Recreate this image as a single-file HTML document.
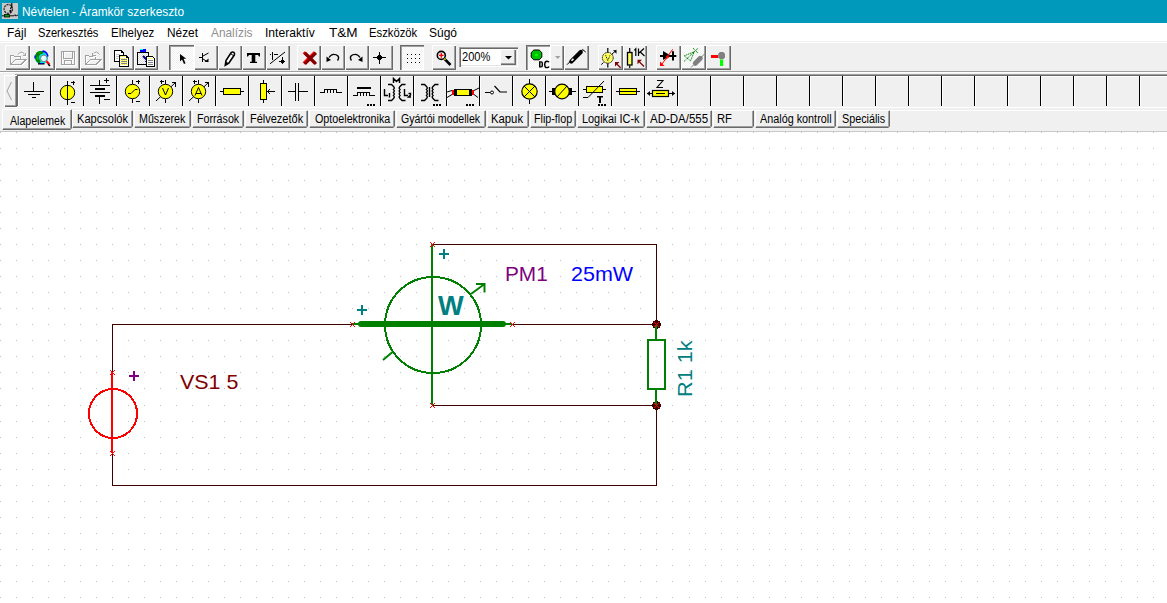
<!DOCTYPE html><html><head><meta charset='utf-8'><style>
*{margin:0;padding:0;box-sizing:border-box}
html,body{width:1167px;height:603px;overflow:hidden;background:#fff;font-family:"Liberation Sans", sans-serif;}
.a{position:absolute}
.t{position:absolute;white-space:pre;line-height:1;font-family:"Liberation Sans", sans-serif}
.btn{position:absolute;top:45px;height:25px;background:#F0F0F0;
  box-shadow: inset 1px 1px #FFFFFF, inset -1px -1px #696969, inset -2px -2px #A0A0A0;}
.dith{background-color:#F0F0F0;background-image:conic-gradient(#fff 25%, transparent 0 50%, #fff 0 75%, transparent 0);background-size:2px 2px;}
.prs{position:absolute;top:45px;height:25px;
  box-shadow: inset 1px 1px #696969, inset 2px 2px #A0A0A0, inset -1px -1px #FFFFFF;}
.tab{position:absolute;top:110px;height:18px;background:#F0F0F0;
  box-shadow: inset 1px 1px #FFFFFF, inset -1px -1px #696969, inset -2px -2px #A0A0A0;
  clip-path: polygon(0 0, calc(100% - 1px) 0, 100% 1px, 100% calc(100% - 2px), calc(100% - 2px) 100%, 1px 100%, 0 calc(100% - 1px));}
</style></head><body>
<div class='a' style='left:0;top:0;width:1167px;height:23px;background:#0099BC'></div>
<svg class='a' style='left:2px;top:3px' width='16' height='16' viewBox='0 0 16 16'>
<rect x='0' y='0' width='16' height='16' fill='#C8C8C8'/>
<ellipse cx='6.3' cy='6' rx='4.2' ry='4.5' fill='none' stroke='#303030' stroke-width='1.3' stroke-dasharray='2.2 0.8'/>
<path d='M9.8 0 V3 L8.5 6' fill='none' stroke='#000' stroke-width='1.1'/>
<path d='M7.2 7.5 L9.2 6.8 L9.6 9.2 L8 9.8 Z' fill='#000'/>
<rect x='2.5' y='11.6' width='5' height='2.4' fill='#00A000' stroke='#000' stroke-width='0.8'/>
<path d='M0 12.8 H2.5 M7.5 12.8 H12 L13 11.6 L14 13.2 L15 12.2 H16' fill='none' stroke='#111' stroke-width='1'/>
</svg>
<div class='a' style='left:0;top:23px;width:1167px;height:18px;background:#fff'></div>
<div class='a' style='left:0;top:41px;width:1167px;height:91px;background:#F0F0F0'></div>
<div class='a' style='left:0;top:42px;width:1167px;height:1px;background:#FFFFFF'></div>
<div class='a' style='left:0;top:71px;width:1167px;height:1px;background:#A0A0A0'></div>
<div class='a' style='left:0;top:72px;width:1167px;height:1px;background:#FFFFFF'></div>
<div class='btn' style='left:5px;width:25px'></div>
<div class='btn' style='left:30px;width:25px'></div>
<div class='btn' style='left:55px;width:25px'></div>
<div class='btn' style='left:80px;width:25px'></div>
<div class='btn' style='left:109px;width:25px'></div>
<div class='btn' style='left:134px;width:24px'></div>
<div class='prs dith' style='left:169px;width:25px'></div>
<div class='btn' style='left:194px;width:24px'></div>
<div class='btn' style='left:218px;width:24px'></div>
<div class='btn' style='left:242px;width:24px'></div>
<div class='btn' style='left:266px;width:24px'></div>
<div class='btn' style='left:297px;width:24px'></div>
<div class='btn' style='left:321px;width:24px'></div>
<div class='btn' style='left:345px;width:24px'></div>
<div class='btn' style='left:369px;width:24px'></div>
<div class='prs dith' style='left:400px;width:24px'></div>
<div class='btn' style='left:432px;width:24px'></div>
<div class='prs dith' style='left:526px;width:24px'></div>
<div class='btn' style='left:550px;width:14px'></div>
<div class='btn' style='left:564px;width:25px'></div>
<div class='btn' style='left:598px;width:25px'></div>
<div class='btn' style='left:623px;width:24px'></div>
<div class='btn' style='left:656px;width:25px'></div>
<div class='btn dith' style='left:681px;width:25px'></div>
<div class='btn' style='left:706px;width:25px'></div>
<div class='a' style='left:459px;top:47px;width:59px;height:20px;background:#fff;box-shadow: inset 1px 1px #A0A0A0, inset 2px 2px #696969, inset -1px -1px #fff, inset -2px -2px #E3E3E3'></div>
<div class='a' style='left:500px;top:49px;width:16px;height:16px;background:#F0F0F0;box-shadow: inset 1px 1px #fff, inset -1px -1px #696969, inset -2px -2px #A0A0A0'></div>
<div class='a' style='left:15px;top:74px;width:1152px;height:33px;background:#F0F0F0;box-shadow: inset 1px 1px #A0A0A0, inset 2px 2px #696969'></div>
<div class='a' style='left:18px;top:76px;width:1149px;height:1px;background:#FFFFFF'></div>
<div class='a' style='left:4px;top:107px;width:1163px;height:1px;background:#FFFFFF'></div>
<div class='a' style='left:17px;top:76px;width:1px;height:30px;background:#696969'></div>
<div class='a' style='left:18px;top:76px;width:1px;height:30px;background:#FFFFFF'></div>
<div class='a' style='left:50px;top:76px;width:1px;height:30px;background:#000'></div>
<div class='a' style='left:51px;top:76px;width:1px;height:30px;background:#FFFFFF'></div>
<div class='a' style='left:83px;top:76px;width:1px;height:30px;background:#000'></div>
<div class='a' style='left:84px;top:76px;width:1px;height:30px;background:#FFFFFF'></div>
<div class='a' style='left:116px;top:76px;width:1px;height:30px;background:#000'></div>
<div class='a' style='left:117px;top:76px;width:1px;height:30px;background:#FFFFFF'></div>
<div class='a' style='left:149px;top:76px;width:1px;height:30px;background:#000'></div>
<div class='a' style='left:150px;top:76px;width:1px;height:30px;background:#FFFFFF'></div>
<div class='a' style='left:182px;top:76px;width:1px;height:30px;background:#000'></div>
<div class='a' style='left:183px;top:76px;width:1px;height:30px;background:#FFFFFF'></div>
<div class='a' style='left:215px;top:76px;width:1px;height:30px;background:#000'></div>
<div class='a' style='left:216px;top:76px;width:1px;height:30px;background:#FFFFFF'></div>
<div class='a' style='left:248px;top:76px;width:1px;height:30px;background:#000'></div>
<div class='a' style='left:249px;top:76px;width:1px;height:30px;background:#FFFFFF'></div>
<div class='a' style='left:281px;top:76px;width:1px;height:30px;background:#000'></div>
<div class='a' style='left:282px;top:76px;width:1px;height:30px;background:#FFFFFF'></div>
<div class='a' style='left:314px;top:76px;width:1px;height:30px;background:#000'></div>
<div class='a' style='left:315px;top:76px;width:1px;height:30px;background:#FFFFFF'></div>
<div class='a' style='left:347px;top:76px;width:1px;height:30px;background:#000'></div>
<div class='a' style='left:348px;top:76px;width:1px;height:30px;background:#FFFFFF'></div>
<div class='a' style='left:380px;top:76px;width:1px;height:30px;background:#000'></div>
<div class='a' style='left:381px;top:76px;width:1px;height:30px;background:#FFFFFF'></div>
<div class='a' style='left:413px;top:76px;width:1px;height:30px;background:#000'></div>
<div class='a' style='left:414px;top:76px;width:1px;height:30px;background:#FFFFFF'></div>
<div class='a' style='left:446px;top:76px;width:1px;height:30px;background:#000'></div>
<div class='a' style='left:447px;top:76px;width:1px;height:30px;background:#FFFFFF'></div>
<div class='a' style='left:479px;top:76px;width:1px;height:30px;background:#000'></div>
<div class='a' style='left:480px;top:76px;width:1px;height:30px;background:#FFFFFF'></div>
<div class='a' style='left:512px;top:76px;width:1px;height:30px;background:#000'></div>
<div class='a' style='left:513px;top:76px;width:1px;height:30px;background:#FFFFFF'></div>
<div class='a' style='left:545px;top:76px;width:1px;height:30px;background:#000'></div>
<div class='a' style='left:546px;top:76px;width:1px;height:30px;background:#FFFFFF'></div>
<div class='a' style='left:578px;top:76px;width:1px;height:30px;background:#000'></div>
<div class='a' style='left:579px;top:76px;width:1px;height:30px;background:#FFFFFF'></div>
<div class='a' style='left:611px;top:76px;width:1px;height:30px;background:#000'></div>
<div class='a' style='left:612px;top:76px;width:1px;height:30px;background:#FFFFFF'></div>
<div class='a' style='left:644px;top:76px;width:1px;height:30px;background:#000'></div>
<div class='a' style='left:645px;top:76px;width:1px;height:30px;background:#FFFFFF'></div>
<div class='a' style='left:677px;top:76px;width:1px;height:30px;background:#000'></div>
<div class='a' style='left:678px;top:76px;width:1px;height:30px;background:#FFFFFF'></div>
<div class='a' style='left:710px;top:76px;width:1px;height:30px;background:#000'></div>
<div class='a' style='left:711px;top:76px;width:1px;height:30px;background:#FFFFFF'></div>
<div class='a' style='left:743px;top:76px;width:1px;height:30px;background:#000'></div>
<div class='a' style='left:744px;top:76px;width:1px;height:30px;background:#FFFFFF'></div>
<div class='a' style='left:776px;top:76px;width:1px;height:30px;background:#000'></div>
<div class='a' style='left:777px;top:76px;width:1px;height:30px;background:#FFFFFF'></div>
<div class='a' style='left:809px;top:76px;width:1px;height:30px;background:#000'></div>
<div class='a' style='left:810px;top:76px;width:1px;height:30px;background:#FFFFFF'></div>
<div class='a' style='left:842px;top:76px;width:1px;height:30px;background:#000'></div>
<div class='a' style='left:843px;top:76px;width:1px;height:30px;background:#FFFFFF'></div>
<div class='a' style='left:875px;top:76px;width:1px;height:30px;background:#000'></div>
<div class='a' style='left:876px;top:76px;width:1px;height:30px;background:#FFFFFF'></div>
<div class='a' style='left:908px;top:76px;width:1px;height:30px;background:#000'></div>
<div class='a' style='left:909px;top:76px;width:1px;height:30px;background:#FFFFFF'></div>
<div class='a' style='left:941px;top:76px;width:1px;height:30px;background:#000'></div>
<div class='a' style='left:942px;top:76px;width:1px;height:30px;background:#FFFFFF'></div>
<div class='a' style='left:974px;top:76px;width:1px;height:30px;background:#000'></div>
<div class='a' style='left:975px;top:76px;width:1px;height:30px;background:#FFFFFF'></div>
<div class='a' style='left:1007px;top:76px;width:1px;height:30px;background:#000'></div>
<div class='a' style='left:1008px;top:76px;width:1px;height:30px;background:#FFFFFF'></div>
<div class='a' style='left:1040px;top:76px;width:1px;height:30px;background:#000'></div>
<div class='a' style='left:1041px;top:76px;width:1px;height:30px;background:#FFFFFF'></div>
<div class='a' style='left:1073px;top:76px;width:1px;height:30px;background:#000'></div>
<div class='a' style='left:1074px;top:76px;width:1px;height:30px;background:#FFFFFF'></div>
<div class='a' style='left:1106px;top:76px;width:1px;height:30px;background:#000'></div>
<div class='a' style='left:1107px;top:76px;width:1px;height:30px;background:#FFFFFF'></div>
<div class='a' style='left:1139px;top:76px;width:1px;height:30px;background:#000'></div>
<div class='a' style='left:1140px;top:76px;width:1px;height:30px;background:#FFFFFF'></div>
<div class='a' style='left:4px;top:75px;width:13px;height:32px;background:#F0F0F0;box-shadow: inset 1px 1px #fff, inset -1px -1px #696969, inset -2px -2px #A0A0A0'></div>
<div class='a' style='left:72px;top:110px;width:1095px;height:1px;background:#FFFFFF'></div>
<div class='tab' style='left:2px;top:109px;width:70px;height:21px'></div>
<div class='tab' style='left:72px;width:61px'></div>
<div class='tab' style='left:134px;width:57px'></div>
<div class='tab' style='left:192px;width:52px'></div>
<div class='tab' style='left:245px;width:63px'></div>
<div class='tab' style='left:309px;width:86px'></div>
<div class='tab' style='left:396px;width:90px'></div>
<div class='tab' style='left:487px;width:42px'></div>
<div class='tab' style='left:530px;width:46px'></div>
<div class='tab' style='left:577px;width:68px'></div>
<div class='tab' style='left:646px;width:66px'></div>
<div class='tab' style='left:713px;width:41px'></div>
<div class='tab' style='left:755px;width:81px'></div>
<div class='tab' style='left:837px;width:53px'></div>
<div class='a' style='left:0;top:131px;width:1167px;height:1px;background:#C8C8C8'></div>
<svg class='a' style='left:0;top:0' width='1167' height='132' viewBox='0 0 1167 132'>
<defs>
<pattern id='dy' x='0' y='0' width='2' height='2' patternUnits='userSpaceOnUse'><rect width='2' height='2' fill='#FFFF00'/><rect width='1' height='1' fill='#FFFFC0'/><rect x='1' y='1' width='1' height='1' fill='#FFFFC0'/></pattern>
<pattern id='dyw' x='0' y='0' width='2' height='2' patternUnits='userSpaceOnUse'><rect width='2' height='2' fill='#FFFFFF'/><rect width='1' height='1' fill='#FFFF00'/></pattern>
<pattern id='dw' x='0' y='0' width='2' height='2' patternUnits='userSpaceOnUse'><rect width='2' height='2' fill='#FFFFFF'/><rect width='1' height='1' fill='#D8D8D8'/><rect x='1' y='1' width='1' height='1' fill='#D8D8D8'/></pattern>
</defs>
<!-- ===== toolbar 1 ===== -->
<g fill='none' stroke-width='1' shape-rendering='crispEdges'>
 <!-- B1 folder disabled -->
 <g stroke='#FFFFFF' transform='translate(1,1)'>
  <path d='M10.5 64.5 V55.5 H13.5 L14.5 56.5 H20.5 V59.5 M10.5 64.5 H21 L26 59.5 H15.5 L10.5 64.5'/>
 </g>
 <g stroke='#A0A0A0'>
  <path d='M10.5 64.5 V55.5 H13.5 L14.5 56.5 H20.5 V59.5 M10.5 64.5 H21 L26 59.5 H15.5 L10.5 64.5'/>
 </g>
 <!-- B3 floppy disabled -->
 <g stroke='#FFFFFF' transform='translate(1,1)'>
  <path d='M61.5 52.5 Q61.5 51.5 62.5 51.5 H73.5 Q74.5 51.5 74.5 52.5 V63.5 Q74.5 64.5 73.5 64.5 H62.5 Q61.5 64.5 61.5 63.5 Z M63.5 51.5 V58.5 H72.5 V51.5 M64.5 64.5 V60.5 H71.5 V64.5'/>
 </g>
 <g stroke='#A0A0A0'>
  <path d='M61.5 52.5 Q61.5 51.5 62.5 51.5 H73.5 Q74.5 51.5 74.5 52.5 V63.5 Q74.5 64.5 73.5 64.5 H62.5 Q61.5 64.5 61.5 63.5 Z M63.5 51.5 V58.5 H72.5 V51.5 M64.5 64.5 V60.5 H71.5 V64.5'/>
 </g>
 <!-- B4 folder w/ back arrow -->
 <g stroke='#FFFFFF' transform='translate(76,1)'>
  <path d='M10.5 64.5 V55.5 H13.5 L14.5 56.5 H20.5 V59.5 M10.5 64.5 H21 L26 59.5 H15.5 L10.5 64.5'/>
 </g>
 <g stroke='#A0A0A0' transform='translate(75,0)'>
  <path d='M10.5 64.5 V55.5 H13.5 L14.5 56.5 H20.5 V59.5 M10.5 64.5 H21 L26 59.5 H15.5 L10.5 64.5'/>
 </g>
</g>
<g fill='none' stroke-width='1'>
 <path d='M18 54.5 Q21 50 24.5 54' stroke='#FFFFFF' transform='translate(1,1)'/>
 <path d='M18 54.5 Q21 50 24.5 54' stroke='#A0A0A0'/>
 <path d='M22.5 55.5 H25.5 V52.5' stroke='#FFFFFF' transform='translate(1,1)'/>
 <path d='M22.5 55.5 H25.5 V52.5' stroke='#A0A0A0' shape-rendering='crispEdges'/>
 <path d='M99.5 54.5 Q96.5 50 93 54' stroke='#FFFFFF' transform='translate(1,1)'/>
 <path d='M99.5 54.5 Q96.5 50 93 54' stroke='#A0A0A0'/>
 <path d='M92.5 52.5 V55.5 H95.5' stroke='#FFFFFF' transform='translate(1,1)'/>
 <path d='M92.5 52.5 V55.5 H95.5' stroke='#A0A0A0' shape-rendering='crispEdges'/>
</g>
<!-- B2 globe -->
<g>
 <circle cx='41.5' cy='57.5' r='6.6' fill='#00E0E0'/>
 <path d='M35.2 56 Q35.5 52 39.5 51 Q42 50.8 44 51.5 L43 53.5 Q40 53.5 39 56 Q38.5 59 40.5 61.5 L39.5 63.5 Q35.5 62 35.2 58 Z' fill='#008000'/>
 <path d='M38.5 52.5 L41 52 L40 54 Z M36.5 57 L38 56 L38.5 59.5 L37 60 Z' fill='#00C000'/>
 <path d='M42.5 51 Q47 51.5 48 56.5 M35 55.5 V58.5' fill='none' stroke='#0000FF' stroke-width='1.3'/>
 <path d='M38 63.8 H44.5' stroke='#000' stroke-width='1.4'/>
 <path d='M40 63.5 H43' stroke='#0000C0' stroke-width='1'/>
 <circle cx='43.8' cy='58.4' r='3.3' fill='#D0FFFF' stroke='#707070' stroke-width='0.9'/>
 <circle cx='43.3' cy='57.8' r='1.3' fill='#FFFFFF'/>
 <path d='M46.5 61.2 L49.3 64.5' stroke='#FF0000' stroke-width='2.2'/>
 <path d='M48.3 64.2 L50 66' stroke='#000' stroke-width='1.6'/>
</g>
<!-- B5 copy -->
<g shape-rendering='crispEdges'>
 <path d='M114.5 50.5 H121.5 L123.5 52.5 V61.5 H114.5 Z' fill='#FFFFFF' stroke='#000'/>
 <path d='M121.5 50.5 V52.5 H123.5' fill='none' stroke='#000'/>
 <path d='M116 54.5 H120 M116 56.5 H120 M116 58.5 H118' stroke='#C0C0C0'/>
 <path d='M119.5 55.5 H126.5 L128.5 57.5 V66.5 H119.5 Z' fill='url(#dyw)' stroke='#000'/>
 <path d='M126.5 55.5 V57.5 H128.5' fill='none' stroke='#000'/>
 <path d='M121 59.5 H127 M121 61.5 H127 M121 63.5 H127' stroke='#808080'/>
</g>
<!-- B6 paste -->
<g shape-rendering='crispEdges'>
 <path d='M137.5 52.5 H148.5 V64.5 H137.5 Z' fill='url(#dw)' stroke='#000'/>
 <rect x='140' y='49' width='6' height='3' fill='#0000FF'/>
 <rect x='140' y='49' width='3' height='1' fill='#00FFFF'/>
 <path d='M143 56 L147 60' stroke='#000080' stroke-width='2' shape-rendering='auto'/>
 <path d='M145 61.5 L148.5 61.5 L148.5 58 Z' fill='#0000A0'/>
 <path d='M146.5 56.5 H152.5 L154.5 58.5 V66.5 H146.5 Z' fill='url(#dyw)' stroke='#000'/>
 <path d='M148 60.5 H153 M148 62.5 H153 M148 64.5 H153' stroke='#808080'/>
</g>
<!-- B7 arrow -->
<path d='M180 54 L180 61.5 L182 59.5 L184 64 L185.5 63.3 L183.6 58.8 L186.3 58.8 Z' fill='#000'/>
<!-- B8 transistor -->
<g fill='none' stroke='#000' shape-rendering='crispEdges'>
 <path d='M199 57.5 H202 M202.5 53 V62'/>
</g>
<g fill='none' stroke='#000'>
 <path d='M203 56 L208.5 53 M203 59 L207 61.5'/>
</g>
<path d='M204.5 62 H208.5 V58.5 Z' fill='#000'/>
<!-- B9 pencil -->
<path d='M225.3 65.2 L226 60.5 L231.2 52.6 Q232.5 51.5 234 52.5 Q235 53.5 234.3 55 L228.8 63.2 Z' fill='#FFFFFF' stroke='#000' stroke-width='1.6'/>
<path d='M225.3 65.2 L225.8 61.3 L228.5 63.3 Z' fill='#000'/>
<path d='M230.6 53.6 L234 56' stroke='#000' stroke-width='1'/>
<!-- B10 T -->
<path d='M247 53 H260 V56.5 H259 L258 55 H255.3 V61.8 H257 V63 H250 V61.8 H251.7 V55 H249 L248 56.5 H247 Z' fill='#000'/>
<!-- B11 wire tool -->
<g fill='none' stroke='#000' shape-rendering='crispEdges'>
 <path d='M272.5 52 V60 M274 54.5 H278 M282.5 57 V64 M278.5 61.5 H285'/>
 <rect x='270' y='54' width='1' height='1' fill='#000' stroke='none'/>
</g>
<path d='M270 63.8 L285 52' stroke='#000' stroke-width='1' fill='none'/>
<rect x='281' y='60' width='3' height='3' fill='#000'/>
<!-- B12 X -->
<path d='M305.5 53.5 L314.5 62.5 M314.5 53.5 L305.5 62.5' stroke='#FF0000' stroke-width='3' stroke-linecap='square' transform='translate(-0.7,-0.2)'/>
<path d='M305.5 53.5 L314.5 62.5 M314.5 53.5 L305.5 62.5' stroke='#800000' stroke-width='3' stroke-linecap='square' transform='translate(0.4,0.4)'/>
<!-- B13 undo -->
<path d='M337.5 60.5 Q339.5 58 338 56 Q336.5 54.3 333.5 54.3 Q331 54.3 329 57.5' fill='none' stroke='#000' stroke-width='1.3'/>
<path d='M326.5 56.5 L326.5 62 L331 60 Z' fill='#000'/>
<!-- B14 redo -->
<path d='M351.5 60.5 Q349.5 58 351 56 Q352.5 54.3 355.5 54.3 Q358 54.3 360 57.5' fill='none' stroke='#000' stroke-width='1.3'/>
<path d='M362.5 56.5 L362.5 62 L358 60 Z' fill='#000'/>
<!-- B15 junction -->
<g fill='none' stroke='#000' shape-rendering='crispEdges'>
 <path d='M373 57.5 H386 M379.5 52 V64'/>
</g>
<rect x='377' y='56' width='5' height='3' fill='#000'/>
<rect x='378' y='55' width='3' height='5' fill='#000'/>
<!-- B16 grid dots -->
<g fill='#000'>
 <rect x='407' y='54' width='1' height='1'/><rect x='411' y='54' width='1' height='1'/><rect x='415' y='54' width='1' height='1'/><rect x='419' y='54' width='1' height='1'/>
 <rect x='407' y='58' width='1' height='1'/><rect x='411' y='58' width='1' height='1'/><rect x='415' y='58' width='1' height='1'/><rect x='419' y='58' width='1' height='1'/>
 <rect x='407' y='62' width='1' height='1'/><rect x='411' y='62' width='1' height='1'/><rect x='415' y='62' width='1' height='1'/><rect x='419' y='62' width='1' height='1'/>
</g>
<!-- B17 zoom -->
<circle cx='441.3' cy='55.4' r='4' fill='url(#dw)' stroke='#000' stroke-width='1.6'/>
<path d='M439 55.4 H443.6 M441.3 53.1 V57.7' stroke='#FF0000' stroke-width='1.3'/>
<path d='M444.5 58.8 L450.5 65' stroke='#000' stroke-width='2.6'/>
<path d='M444.3 58.6 L445.5 59.8' stroke='#E0E000' stroke-width='1.5'/>
<!-- combo arrow -->
<path d='M505 56 H512 L508.5 59.5 Z' fill='#000'/>
<!-- DC -->
<path d='M533.8 50 H539.2 L541.8 52.6 V57.2 L539.2 59.8 H533.8 L531.2 57.2 V52.6 Z' fill='#00C000' stroke='#000' stroke-width='1'/>
<circle cx='536.5' cy='54.9' r='1.5' fill='#00FF00'/>
<path d='M539 61.2 H541.2 Q543 61.2 543 63 V65.8 Q543 67.6 541.2 67.6 H539 Z M540.5 62.5 V66.3 H541 Q541.6 66.3 541.6 65.5 V63.3 Q541.6 62.5 541 62.5 Z' fill='#000' fill-rule='evenodd'/>
<path d='M549 62.3 Q548.6 61.2 547 61.2 Q544.7 61.2 544.7 64.4 Q544.7 67.6 547 67.6 Q548.6 67.6 549 66.5' fill='none' stroke='#000' stroke-width='1.4'/>
<path d='M555 56 H560.5 L557.7 59 Z' fill='#A0A0A0'/>
<!-- probe -->
<path d='M567 64.7 L570.5 61.2' stroke='#000' stroke-width='1'/>
<path d='M571.3 61.5 L580.8 52' stroke='#000' stroke-width='4.2' stroke-linecap='round'/>
<path d='M571.5 60.8 L573.5 58.8' stroke='#FFFFFF' stroke-width='1.6'/>
<path d='M581 51.5 L582.6 49.5 L585.7 52' fill='none' stroke='#000' stroke-width='1'/>
<!-- voltmeter btn -->
<circle cx='607.8' cy='57.8' r='5.4' fill='url(#dy)' stroke='#000' stroke-width='1' stroke-dasharray='1.2 0.6'/>
<path d='M607.8 48 V52.4 M607.8 63.2 V67.5' stroke='#000' stroke-width='1.2'/>
<path d='M605.7 55.3 L607.8 60.6 L610 55.3' fill='none' stroke='#000' stroke-width='1' stroke-dasharray='1 0.8'/>
<path d='M601.3 64.6 L603.5 62.5 M611.5 54.5 L616.3 50.3' stroke='#000' stroke-width='1'/>
<path d='M613 50.3 H616.5 V53.8 Z' fill='#000'/>
<path d='M620.6 67.8 L617 64.2' stroke='#800000' stroke-width='1.3'/>
<path d='M615 62 H619.5 L615 66.5 Z' fill='#800000'/>
<!-- 1K btn -->
<rect x='627.5' y='52.5' width='4.5' height='12.5' fill='url(#dy)' stroke='#000' stroke-width='1.3'/>
<path d='M629.7 48 V52 M629.7 65.5 V68' stroke='#000' stroke-width='1.2'/>
<path d='M634.3 50.3 L635.8 48.8 V56' fill='none' stroke='#000' stroke-width='1.2'/>
<path d='M638.5 48.5 V56 M639 53 L644 48.5 M640 51.8 L644.5 56' fill='none' stroke='#000' stroke-width='1.2'/>
<path d='M644 66.5 L639.5 62' stroke='#800000' stroke-width='1.3'/>
<path d='M637.5 59.8 H642 L637.5 64.3 Z' fill='#800000'/>
<!-- diode fault -->
<path d='M660 56 H676.3' stroke='#000' stroke-width='2'/>
<path d='M663 51 L670.5 55.5 L663 60 Z' fill='#000'/>
<path d='M673 51.3 V60.5' stroke='#000' stroke-width='2'/>
<path d='M672.7 49.3 L662 64' stroke='#FF0000' stroke-width='1'/>
<path d='M660 66 V61.5 L664.5 66 Z' fill='#FF0000'/>
<path d='M669 54.5 L666 56.8 H669 L666 59' fill='none' stroke='#FF0000' stroke-width='1'/>
<!-- green LED -->
<g fill='none' stroke='#008000' stroke-width='1' stroke-dasharray='1.3 0.7'>
 <path d='M684.3 55.8 L694.3 51.7 L690.5 60.9 Z'/>
 <path d='M684 61.5 L694.5 51.5'/>
 <path d='M693 48.2 L698 53 M693 53 L698 48.2'/>
</g>
<path d='M695.3 63.3 L700.3 58.3' stroke='#808080' stroke-width='5' stroke-linecap='round'/>
<path d='M691 67.5 L694 64.5 M701.5 57 L704.7 53.8' stroke='#808080' stroke-width='1'/>
<!-- red-green -->
<rect x='711' y='55' width='7' height='3' fill='#FF0000'/>
<path d='M720 52 H723.2 L725 53.8 V57.2 L723.2 59.2 H720 L718.2 57.2 V53.8 Z' fill='#808080'/>
<rect x='720' y='59.5' width='3.2' height='6.5' fill='#00FF00'/>
<!-- ===== palette ===== -->
<path d='M11.5 82 L7 91 L11.5 100' fill='none' stroke='#A0A0A0' stroke-width='1'/>
<g fill='none' stroke='#000' stroke-width='1' shape-rendering='crispEdges'>
 <!-- C0 ground -->
 <path d='M33.5 82 V91 M24 91.5 H44 M28 94.5 H40 M32 97.5 H36'/>
 <!-- C2 battery -->
 <path d='M99.5 80 V85 M90 85.5 H110 M90 92.5 H110 M99.5 97 V104 M104 80.5 H109 M106.5 78 V83 M104 99.5 H110'/>
 <!-- C8 capacitor -->
 <path d='M295.5 83 V101 M298.5 83 V101 M288 91.5 H295 M299 91.5 H308'/>
 <!-- C9 inductor -->
 <path d='M320 92.5 H324.5 V89.5 H336.5 V92.5 H342 M327.5 89.5 V92.5 M330.5 89.5 V92.5 M333.5 89.5 V92.5'/>
 <!-- C10 inductor core -->
 <path d='M353 95.5 H357.5 V92.5 H369.5 V95.5 H375 M360.5 92.5 V95.5 M363.5 92.5 V95.5 M366.5 92.5 V95.5'/>
</g>
<g fill='#000' shape-rendering='crispEdges'>
 <rect x='95' y='88' width='10' height='2'/><rect x='95' y='95' width='10' height='2'/>
 <rect x='357' y='87' width='14' height='2'/>
 <rect x='367' y='104' width='2' height='2'/><rect x='370' y='104' width='2' height='2'/><rect x='373' y='104' width='2' height='2'/>
 <rect x='433' y='104' width='2' height='2'/><rect x='436' y='104' width='2' height='2'/><rect x='439' y='104' width='2' height='2'/>
 <rect x='466' y='104' width='2' height='2'/><rect x='469' y='104' width='2' height='2'/><rect x='472' y='104' width='2' height='2'/>
 <rect x='598' y='104' width='2' height='2'/><rect x='601' y='104' width='2' height='2'/><rect x='604' y='104' width='2' height='2'/>
</g>
<!-- C1 vsource -->
<circle cx='67.5' cy='92.5' r='7.2' fill='#FFFF00' stroke='#000' stroke-width='1'/>
<g fill='none' stroke='#000' stroke-width='1' shape-rendering='crispEdges'>
 <path d='M67.5 81 V105 M71 82.5 H75 M73 80.5 V85 M71 102.5 H75'/>
</g>
<!-- C3 AC -->
<circle cx='132.5' cy='91.5' r='7.2' fill='#FFFF00' stroke='#000' stroke-width='1'/>
<g fill='none' stroke='#000' stroke-width='1' shape-rendering='crispEdges'>
 <path d='M132.5 80 V84.3 M132.5 98.7 V103 M136 81.5 H140 M138 79.5 V84 M136 101.5 H140'/>
</g>
<path d='M128 93.5 H131 L135 89.5 H137.5' fill='none' stroke='#000' stroke-width='1'/>
<!-- C4 voltmeter -->
<path d='M156 101 L175.5 82.5' fill='none' stroke='#000' stroke-width='1'/>
<circle cx='165.5' cy='91.5' r='7.2' fill='#FFFF00' stroke='#000' stroke-width='1'/>
<g fill='none' stroke='#000' stroke-width='1' shape-rendering='crispEdges'>
 <path d='M165.5 80 V84.3 M165.5 98.7 V103 M159.5 81.5 H163.5 M161.5 79.5 V84'/>
 <path d='M171.5 82.5 H176 M175.5 82.5 V86.5'/>
</g>
<path d='M162.5 88 L165.5 95 L168.5 88' fill='none' stroke='#000' stroke-width='1'/>
<!-- C5 ammeter -->
<path d='M189 101 L208.5 82.5' fill='none' stroke='#000' stroke-width='1'/>
<circle cx='198.5' cy='91.5' r='7.2' fill='#FFFF00' stroke='#000' stroke-width='1'/>
<g fill='none' stroke='#000' stroke-width='1' shape-rendering='crispEdges'>
 <path d='M198.5 80 V84.3 M198.5 98.7 V103 M192.5 81.5 H196.5 M194.5 79.5 V84'/>
 <path d='M204.5 82.5 H209 M208.5 82.5 V86.5 M196 93.5 H201'/>
</g>
<path d='M195 95.5 L198.5 87.5 L202 95.5' fill='none' stroke='#000' stroke-width='1'/>
<!-- C6 resistor, C7 pot, C18 fuse -->
<g stroke='#000' stroke-width='1' shape-rendering='crispEdges'>
 <rect x='223.5' y='88.5' width='17' height='6' fill='#FFFF00'/>
 <path d='M220 91.5 H223.5 M240.5 91.5 H244' fill='none'/>
 <rect x='260.5' y='83.5' width='6' height='16' fill='#FFFF00'/>
 <path d='M263.5 80 V83.5 M263.5 99.5 V103 M267 91.5 H275' fill='none'/>
 <rect x='619.5' y='88.5' width='17' height='6' fill='#FFFF00'/>
 <path d='M616 91.5 H619.5 M636.5 91.5 H640 M620 91.5 H636' fill='none'/>
 <rect x='586.5' y='86.5' width='16' height='6' fill='#FFFF00'/>
 <path d='M583 89.5 H586.5 M602.5 89.5 H606 M583 97.5 H588' fill='none'/>
</g>
<path d='M270 89 L267.5 91.5 L270 94' fill='none' stroke='#000' stroke-width='1'/>
<path d='M588 97.5 L604 81' fill='none' stroke='#000' stroke-width='1'/>
<path d='M597 96 H603 V97.5 H601 V103 H599 V97.5 H597 Z' fill='#000'/>
<!-- C11 transformer M -->
<g fill='none' stroke='#000' stroke-width='1.4'>
 <path d='M388 84.5 H391.5 L393.5 86.5 Q395 88 393.5 89.5 Q395 91 393.5 92.5 Q395 94 393.5 95.5 Q395 97 393.5 98.5 L391.5 100.5 H388'/>
 <path d='M405.5 84.5 H402 L400 86.5 Q398.5 88 400 89.5 Q398.5 91 400 92.5 Q398.5 94 400 95.5 Q398.5 97 400 98.5 L402 100.5 H405.5'/>
 <path d='M384.5 89 V95.5 H388 M389.5 93 V97.5 M404.5 89 V95.5 H408 M408.5 93.5 H410.5 V95 L408.5 97 H411'/>
</g>
<path d='M393.5 83 V78.5 L396.5 81.5 L399.5 78.5 V83' fill='none' stroke='#000' stroke-width='1.5'/>
<!-- C12 transformer core -->
<g fill='none' stroke='#000' stroke-width='1.4'>
 <path d='M421 84.5 H424.5 L426.5 86.5 Q428 88 426.5 89.5 Q428 91 426.5 92.5 Q428 94 426.5 95.5 Q428 97 426.5 98.5 L424.5 100.5 H421'/>
 <path d='M438.5 84.5 H435 L433 86.5 Q431.5 88 433 89.5 Q431.5 91 433 92.5 Q431.5 94 433 95.5 Q431.5 97 433 98.5 L435 100.5 H438.5'/>
 <path d='M429.5 87 V97'/>
</g>
<!-- C13 transmission line -->
<rect x='456.5' y='89.5' width='13' height='6' fill='#FFFF00' stroke='#000' stroke-width='1'/>
<rect x='454' y='89' width='3' height='7' fill='#000'/>
<rect x='469' y='89' width='3' height='7' fill='#000'/>
<rect x='452' y='90' width='2' height='5' fill='#FF0000'/>
<rect x='472' y='90' width='2' height='5' fill='#FF0000'/>
<path d='M447 92 L452 90.5 M447 97.5 L452 94.5 M474 90.5 L479 88 M474 94.5 L478 97.5' fill='none' stroke='#000' stroke-width='1'/>
<!-- C14 switch -->
<path d='M485 92.5 H490.5 M494.5 86 L500 92 H507' fill='none' stroke='#000' stroke-width='1.2'/>
<circle cx='492' cy='92.5' r='1.5' fill='#fff' stroke='#000' stroke-width='1'/>
<!-- C15 lamp -->
<circle cx='529.5' cy='91.5' r='7.7' fill='#FFFF00' stroke='#000' stroke-width='1.2'/>
<path d='M524 86 L535 97 M535 86 L524 97' stroke='#000' stroke-width='1'/>
<path d='M529.5 79 V83.5 M529.5 99.5 V104' stroke='#000' stroke-width='1' shape-rendering='crispEdges'/>
<!-- C16 motor -->
<rect x='552' y='88' width='3' height='7' fill='#000'/>
<rect x='569' y='88' width='3' height='7' fill='#000'/>
<path d='M549 91.5 H552 M572 91.5 H576' stroke='#000' stroke-width='1' shape-rendering='crispEdges'/>
<circle cx='562' cy='91.5' r='7.3' fill='#FFFF00' stroke='#000' stroke-width='1.2'/>
<path d='M557 97 L567 86' stroke='#000' stroke-width='1'/>
<!-- C19 impedance -->
<path d='M657 80.5 H663 L657 87.5 H663' fill='none' stroke='#000' stroke-width='1.1'/>
<rect x='652.5' y='90.5' width='16' height='6' fill='#FFFF00' stroke='#000' stroke-width='1.2'/>
<path d='M647 93.5 H652 M669 93.5 H675 M656 93.5 H665' fill='none' stroke='#000' stroke-width='1'/>
<path d='M650 91 L647 93.5 L650 96 Z M672 91 L675 93.5 L672 96 Z' fill='#000'/>
</svg>

<svg class='a' style='left:0;top:132px' width='1167' height='471' shape-rendering='crispEdges'><defs><pattern id='g0' x='0' y='0' width='16' height='16' patternUnits='userSpaceOnUse'><rect x='0' y='0' width='1' height='1' fill='#C0C0C0'/></pattern><pattern id='g1' x='1' y='0' width='16' height='16' patternUnits='userSpaceOnUse'><rect x='0' y='0' width='1' height='1' fill='#C0C0C0'/></pattern><pattern id='g2' x='0' y='1' width='16' height='16' patternUnits='userSpaceOnUse'><rect x='0' y='0' width='1' height='1' fill='#C0C0C0'/></pattern><pattern id='g3' x='1' y='1' width='16' height='16' patternUnits='userSpaceOnUse'><rect x='0' y='0' width='1' height='1' fill='#C0C0C0'/></pattern></defs><rect x='0' y='0' width='680' height='264' fill='url(#g0)'/><rect x='680' y='0' width='487' height='264' fill='url(#g1)'/><rect x='0' y='264' width='680' height='207' fill='url(#g2)'/><rect x='680' y='264' width='487' height='207' fill='url(#g3)'/></svg>
<svg class='a' style='left:0;top:0' width='1167' height='603' viewBox='0 0 1167 603'>
<g stroke='#400000' stroke-width='1' fill='none' shape-rendering='crispEdges'>
<path d='M112.5 372 V324.5 H352'/>
<path d='M112.5 453 V485.5 H656.5 V405'/>
<path d='M432 244.5 H656.5 V324'/>
<path d='M512 324.5 H656'/>
<path d='M432 405.5 H656'/>
</g>
<g stroke='#FF0000' stroke-width='2' fill='none'>
<path d='M112 372 V453' shape-rendering='crispEdges'/>
<ellipse cx='113' cy='413.5' rx='24' ry='24.5' shape-rendering='crispEdges'/>
</g>
<g stroke='#008000' fill='none'>
<path d='M432 244 V405' stroke-width='2' shape-rendering='crispEdges'/>
<circle cx='433' cy='325' r='48' stroke-width='2' shape-rendering='crispEdges'/>
<path d='M352 324 H512' stroke-width='2' shape-rendering='crispEdges'/>
<path d='M361 324 H503' stroke-width='6' stroke-linecap='round'/>
<path d='M471 294 L484.5 284 M476 284 H484.5 V292.5' stroke-width='2'/>
<path d='M392.5 352 L383 360' stroke-width='2'/>
</g>
<circle cx='656.5' cy='324.5' r='4.3' fill='#400000' shape-rendering='crispEdges'/>
<circle cx='656.5' cy='405.5' r='4.3' fill='#400000' shape-rendering='crispEdges'/>
<g stroke='#008000' stroke-width='2' fill='none' shape-rendering='crispEdges'>
<path d='M656 325 V340 M656 389 V405'/>
<rect x='648' y='340' width='17' height='49'/>
</g>
<g stroke='#FF0000' stroke-width='1' fill='none' shape-rendering='crispEdges'>
<path d='M110 370 L115 375 M115 370 L110 375'/>
<path d='M110 451 L115 456 M115 451 L110 456'/>
<path d='M350 322 L355 327 M355 322 L350 327'/>
<path d='M510 322 L515 327 M515 322 L510 327'/>
<path d='M430 242 L435 247 M435 242 L430 247'/>
<path d='M430 403 L435 408 M435 403 L430 408'/>
<path d='M654 322 L659 327 M659 322 L654 327'/>
<path d='M654 403 L659 408 M659 403 L654 408'/>
</g>
<path d='M129 376 H139 M134 371 V381' stroke='#800080' stroke-width='2' shape-rendering='crispEdges'/>
<path d='M439 254 H449 M444 249 V259' stroke='#008080' stroke-width='2' shape-rendering='crispEdges'/>
<path d='M357 310 H367 M362 305 V315' stroke='#008080' stroke-width='2' shape-rendering='crispEdges'/>
</svg>

<div class='t' style='left:22.19px;top:5px;font-size:13px;font-weight:normal;color:#FFFFFF;transform:scaleX(0.9114);transform-origin:0 0'>Névtelen - Áramkör szerkeszto</div>
<div class='t' style='left:6.78px;top:26px;font-size:13px;font-weight:normal;color:#000;transform:scaleX(0.9211);transform-origin:0 0'>Fájl</div>
<div class='t' style='left:38.15px;top:26px;font-size:13px;font-weight:normal;color:#000;transform:scaleX(0.8522);transform-origin:0 0'>Szerkesztés</div>
<div class='t' style='left:110.52px;top:26px;font-size:13px;font-weight:normal;color:#000;transform:scaleX(0.8812);transform-origin:0 0'>Elhelyez</div>
<div class='t' style='left:166.79px;top:26px;font-size:13px;font-weight:normal;color:#000;transform:scaleX(0.9121);transform-origin:0 0'>Nézet</div>
<div class='t' style='left:211.00px;top:26px;font-size:13px;font-weight:normal;color:#8F8F8F;transform:scaleX(0.9111);transform-origin:0 0'>Analízis</div>
<div class='t' style='left:264.67px;top:26px;font-size:13px;font-weight:normal;color:#000;transform:scaleX(0.9321);transform-origin:0 0'>Interaktív</div>
<div class='t' style='left:328.60px;top:26px;font-size:13px;font-weight:normal;color:#000;transform:scaleX(1.0423);transform-origin:0 0'>T&amp;M</div>
<div class='t' style='left:368.53px;top:26px;font-size:13px;font-weight:normal;color:#000;transform:scaleX(0.8673);transform-origin:0 0'>Eszközök</div>
<div class='t' style='left:429.38px;top:26px;font-size:13px;font-weight:normal;color:#000;transform:scaleX(0.9207);transform-origin:0 0'>Súgó</div>
<div class='t' style='left:461.78px;top:51px;font-size:12px;font-weight:normal;color:#000;transform:scaleX(0.9207);transform-origin:0 0'>200%</div>
<div class='t' style='left:10.30px;top:115px;font-size:12px;font-weight:normal;color:#000;transform:scaleX(0.8810);transform-origin:0 0'>Alapelemek</div>
<div class='t' style='left:77.08px;top:113px;font-size:12px;font-weight:normal;color:#000;transform:scaleX(0.9222);transform-origin:0 0'>Kapcsolók</div>
<div class='t' style='left:138.81px;top:113px;font-size:12px;font-weight:normal;color:#000;transform:scaleX(0.8922);transform-origin:0 0'>Műszerek</div>
<div class='t' style='left:196.61px;top:113px;font-size:12px;font-weight:normal;color:#000;transform:scaleX(0.8913);transform-origin:0 0'>Források</div>
<div class='t' style='left:249.88px;top:113px;font-size:12px;font-weight:normal;color:#000;transform:scaleX(0.9158);transform-origin:0 0'>Félvezetők</div>
<div class='t' style='left:314.90px;top:113px;font-size:12px;font-weight:normal;color:#000;transform:scaleX(0.8952);transform-origin:0 0'>Optoelektronika</div>
<div class='t' style='left:400.72px;top:113px;font-size:12px;font-weight:normal;color:#000;transform:scaleX(0.8775);transform-origin:0 0'>Gyártói modellek</div>
<div class='t' style='left:490.86px;top:113px;font-size:12px;font-weight:normal;color:#000;transform:scaleX(0.9424);transform-origin:0 0'>Kapuk</div>
<div class='t' style='left:533.51px;top:113px;font-size:12px;font-weight:normal;color:#000;transform:scaleX(0.8927);transform-origin:0 0'>Flip-flop</div>
<div class='t' style='left:581.79px;top:113px;font-size:12px;font-weight:normal;color:#000;transform:scaleX(0.9081);transform-origin:0 0'>Logikai IC-k</div>
<div class='t' style='left:650.00px;top:113px;font-size:12px;font-weight:normal;color:#000;transform:scaleX(0.9567);transform-origin:0 0'>AD-DA/555</div>
<div class='t' style='left:717.47px;top:113px;font-size:12px;font-weight:normal;color:#000;transform:scaleX(0.9333);transform-origin:0 0'>RF</div>
<div class='t' style='left:760.30px;top:113px;font-size:12px;font-weight:normal;color:#000;transform:scaleX(0.9013);transform-origin:0 0'>Analóg kontroll</div>
<div class='t' style='left:841.90px;top:113px;font-size:12px;font-weight:normal;color:#000;transform:scaleX(0.8979);transform-origin:0 0'>Speciális</div>
<div class='t' style='left:180.00px;top:371px;font-size:21px;font-weight:normal;color:#800000;transform:scaleX(1.0196);transform-origin:0 0'>VS1 5</div>
<div class='t' style='left:505.22px;top:263px;font-size:21px;font-weight:normal;color:#800080;transform:scaleX(0.9900);transform-origin:0 0'>PM1</div>
<div class='t' style='left:571.38px;top:263px;font-size:21px;font-weight:normal;color:#0000FF;transform:scaleX(1.0233);transform-origin:0 0'>25mW</div>
<div class='t' style='left:438.00px;top:293px;font-size:27px;font-weight:bold;color:#008080;transform:scaleX(1.0077);transform-origin:0 0'>W</div>
<div class='t' style='left:673.5px;top:396.76px;font-size:21px;color:#008080;transform:rotate(-90deg) scaleX(1.0321);transform-origin:0 0'>R1 1k</div>
</body></html>
